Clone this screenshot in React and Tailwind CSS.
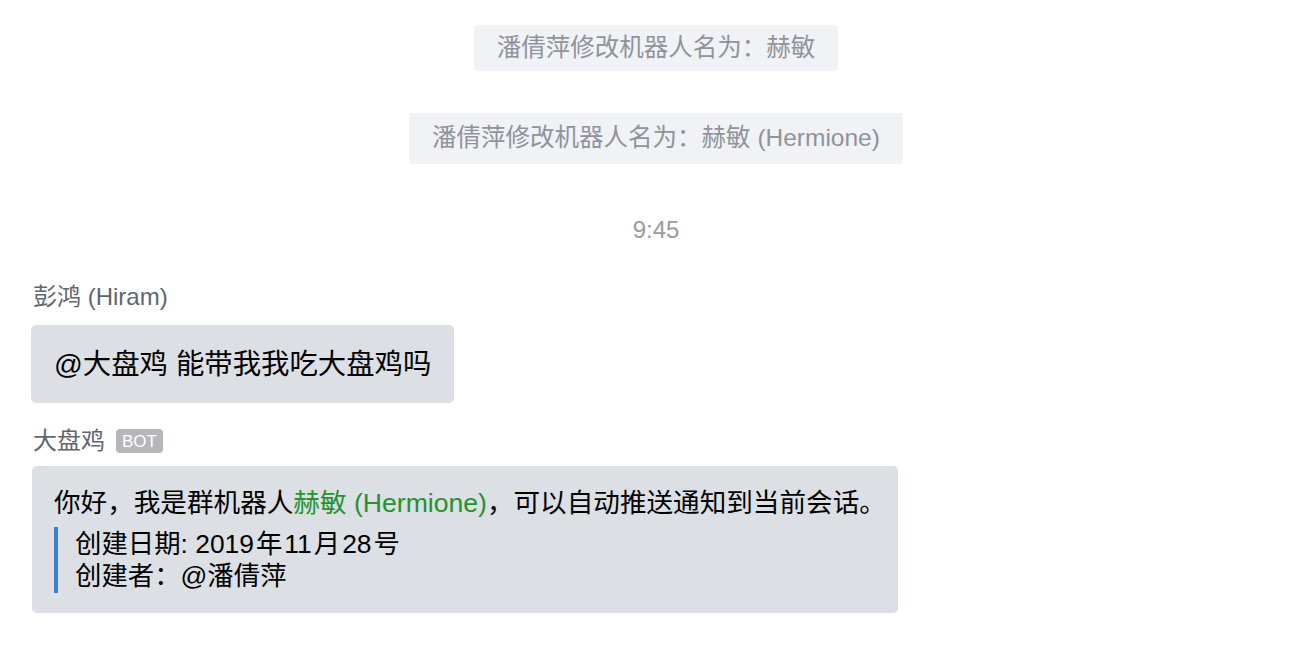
const font = { fontFamily: '"Liberation Sans", "Noto Sans CJK SC", sans-serif' };

function SystemNotice({ children, className }) {
  return (
    <div className={`flex items-center rounded-[4px] bg-[#f0f2f5] px-[23px] text-[24.5px] text-[#8f939b] ${className}`}>
      <span className="leading-none">{children}</span>
    </div>
  );
}

export default function App() {
  return (
    <div style={font} className="h-[646px] w-[1306px] overflow-hidden bg-white">
      <div className="flex flex-col items-center pl-[6px] pt-[25px]">
        <SystemNotice className="h-[46px]">潘倩萍修改机器人名为：赫敏</SystemNotice>
        <SystemNotice className="mt-[42px] h-[51px]">潘倩萍修改机器人名为：赫敏 (Hermione)</SystemNotice>
        <div className="mt-[53px] text-[24px] leading-[26px] text-[#9b9b9b]">9:45</div>
      </div>

      <div className="flex flex-col items-start pl-[31px]">
        <div className="mt-[40px] pl-[2px] text-[24px] leading-[28px] text-[#5f6670]">彭鸿 (Hiram)</div>
        <div className="mt-[14px] flex h-[78px] items-center rounded-[5px] bg-[#dcdfe4] px-[23px] text-[28.4px] leading-none text-black">
          @大盘鸡 能带我我吃大盘鸡吗
        </div>

        <div className="mt-[24px] flex items-center gap-[11px] pl-[2px]">
          <span className="text-[24px] leading-[28px] text-[#5f6670]">大盘鸡</span>
          <span className="flex h-[24px] items-center rounded-[4px] bg-[#b6b7bb] px-[6px] text-[17px] leading-none text-white">BOT</span>
        </div>
        <div className="ml-[1px] mt-[11px] w-[866px] rounded-[5px] bg-[#dcdfe4] pb-[20px] pl-[22px] pt-[22px] text-[26.6px] text-black">
          <div className="whitespace-nowrap leading-[30px]">
            你好，我是群机器人<span className="text-[#24922f]">赫敏 (Hermione)</span>，可以自动推送通知到当前会话。
          </div>
          <div className="mt-[9px] border-l-[4px] border-[#3b7ddd] py-[1px] pl-[17px] text-[26.4px] leading-[32px]">
            <div className="whitespace-nowrap">
              创建日期: 2019<span className="ml-[2px]">年</span><span className="ml-[2px]">11</span>
              <span className="ml-[2px]">月</span><span className="ml-[2px]">28</span><span className="ml-[2px]">号</span>
            </div>
            <div>创建者：@潘倩萍</div>
          </div>
        </div>
      </div>
    </div>
  );
}
